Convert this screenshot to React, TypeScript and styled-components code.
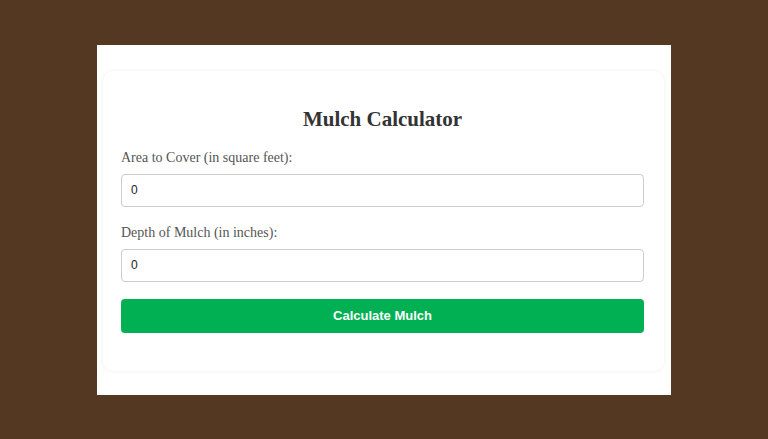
import styled, { createGlobalStyle } from "styled-components";

const GlobalStyle = createGlobalStyle`
  html, body {
    margin: 0;
    padding: 0;
    height: 100%;
  }
  body {
    background: #553822;
    font-family: "Liberation Serif", "Times New Roman", serif;
  }
  #root {
    height: 100%;
  }
`;

const Page = styled.div`
  height: 100%;
  display: flex;
  align-items: center;
  justify-content: center;
`;

const Panel = styled.div`
  width: 574px;
  height: 350px;
  background: #ffffff;
  box-sizing: border-box;
  padding: 26px 7px 24px 6px;
`;

const Card = styled.div`
  height: 100%;
  box-sizing: border-box;
  border-radius: 10px;
  box-shadow: 0 0 4px rgba(0, 0, 0, 0.07);
  padding: 30px 20px 0 18px;
`;

const Title = styled.h2`
  margin: 0 0 12px;
  text-align: center;
  font-size: 21px;
  font-weight: bold;
  color: #333333;
  line-height: 36px;
`;

const Field = styled.div`
  display: flex;
  flex-direction: column;
  margin-bottom: 17px;
`;

const Label = styled.label`
  font-size: 14px;
  color: #555555;
  line-height: 17px;
  margin-bottom: 8px;
`;

const Input = styled.input`
  height: 33px;
  box-sizing: border-box;
  border: 1px solid #cccccc;
  border-radius: 4px;
  padding: 0 9px;
  font-family: "Liberation Sans", Arial, sans-serif;
  font-size: 12px;
  color: #222222;
  outline: none;
`;

const Button = styled.button`
  width: 100%;
  height: 34px;
  border: none;
  border-radius: 4px;
  background: #00b052;
  color: #ffffff;
  font-family: "Liberation Sans", Arial, sans-serif;
  font-size: 13px;
  font-weight: bold;
  cursor: pointer;
`;

export default function App() {
  return (
    <>
      <GlobalStyle />
      <Page>
        <Panel>
          <Card>
            <Title>Mulch Calculator</Title>
            <Field>
              <Label htmlFor="area">Area to Cover (in square feet):</Label>
              <Input id="area" type="text" defaultValue="0" />
            </Field>
            <Field>
              <Label htmlFor="depth">Depth of Mulch (in inches):</Label>
              <Input id="depth" type="text" defaultValue="0" />
            </Field>
            <Button>Calculate Mulch</Button>
          </Card>
        </Panel>
      </Page>
    </>
  );
}
